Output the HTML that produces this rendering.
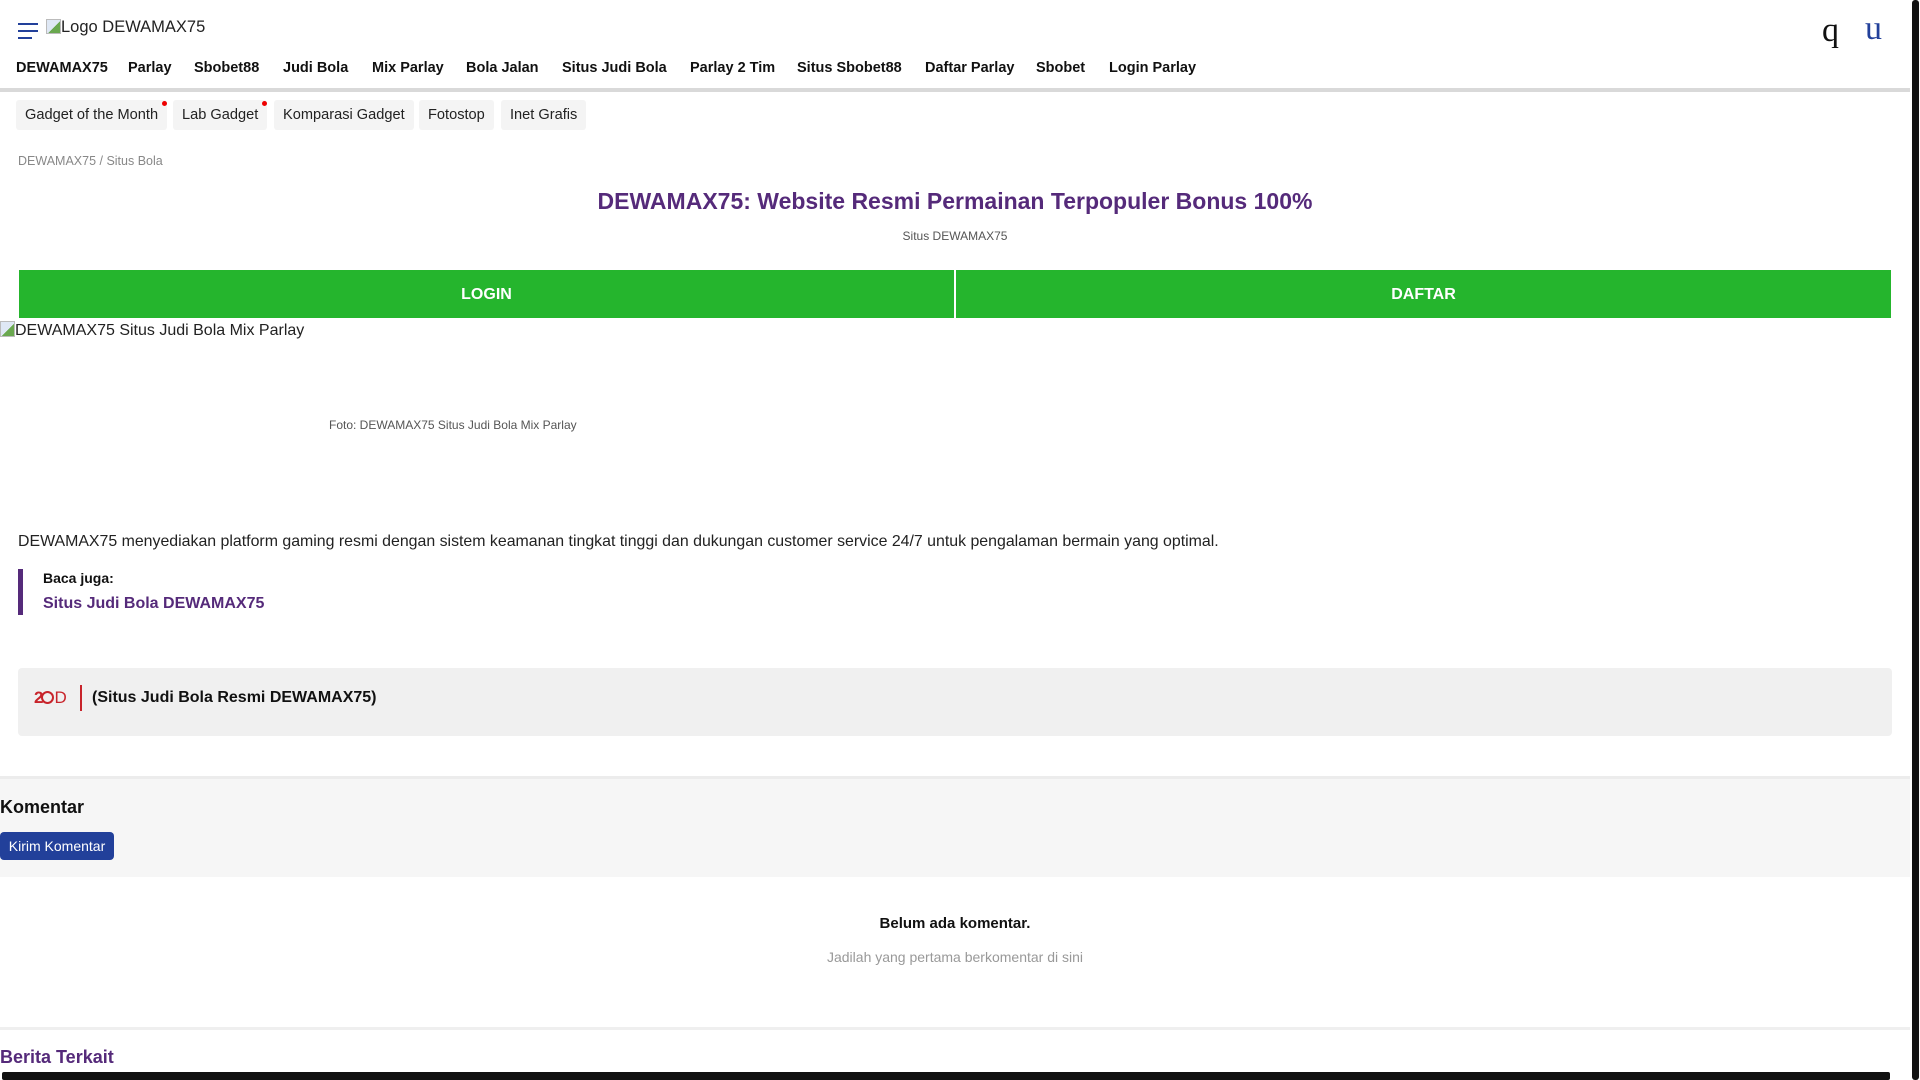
<!DOCTYPE html>
<html><head><meta charset="utf-8"><style>
*{margin:0;padding:0;box-sizing:border-box}
body{width:1920px;height:1080px;overflow:hidden;background:#fff;font-family:"Liberation Sans",sans-serif;color:#111;position:relative}
.a{position:absolute;white-space:nowrap}
.nav span{position:absolute;top:60px;font-weight:bold;font-size:14.5px;color:#111}
.tag{position:absolute;top:100px;height:30px;background:#f4f4f4;border-radius:3px;font-size:14.6px;line-height:30px;padding:0 9px;color:#222}
.dot{position:absolute;top:1px;right:0px;width:5px;height:5px;border-radius:50%;background:#e00}
</style></head><body>
<div class="a" style="left:18px;top:23px;width:20px;height:2px;background:#22409a"></div>
<div class="a" style="left:18px;top:30px;width:20px;height:2px;background:#22409a"></div>
<div class="a" style="left:18px;top:37px;width:14px;height:2px;background:#22409a"></div>
<div class="a" style="left:46px;top:18px;font-size:16.5px;color:#222"><span style="display:inline-block;width:15px;height:15px;border:1px solid #bbb;background:linear-gradient(135deg,#dfe8f5 55%,#6aa84f 55%);vertical-align:-2px"></span>Logo DEWAMAX75</div>
<div class="a" style="left:1822px;top:12px;font-family:'Liberation Serif',serif;font-size:34px;color:#111">q</div>
<div class="a" style="left:1865px;top:10px;font-family:'Liberation Serif',serif;font-size:34px;color:#22409a">u</div>
<div class="a" style="left:1912px;top:0;width:7px;height:1080px;background:#111;border-radius:3px"></div>
<div class="nav">
<span style="left:16px">DEWAMAX75</span><span style="left:128px">Parlay</span><span style="left:194px">Sbobet88</span><span style="left:283px">Judi Bola</span><span style="left:372px">Mix Parlay</span><span style="left:466px">Bola Jalan</span><span style="left:562px">Situs Judi Bola</span><span style="left:690px">Parlay 2 Tim</span><span style="left:797px">Situs Sbobet88</span><span style="left:925px">Daftar Parlay</span><span style="left:1036px">Sbobet</span><span style="left:1109px">Login Parlay</span>
</div>
<div class="a" style="left:0;top:88px;width:1910px;height:4px;background:#d9d9d9"></div>
<div class="tag" style="left:16px">Gadget of the Month<i class="dot"></i></div>
<div class="tag" style="left:173px">Lab Gadget<i class="dot"></i></div>
<div class="tag" style="left:274px">Komparasi Gadget</div>
<div class="tag" style="left:419px">Fotostop</div>
<div class="tag" style="left:501px">Inet Grafis</div>
<div class="a" style="left:18px;top:154px;font-size:12.5px;color:#888">DEWAMAX75 / Situs Bola</div>
<div class="a" style="left:0;width:1910px;text-align:center;top:188px;font-size:23px;font-weight:bold;color:#552a7a">DEWAMAX75: Website Resmi Permainan Terpopuler Bonus 100%</div>
<div class="a" style="left:0;width:1910px;text-align:center;top:229px;font-size:12px;color:#555">Situs DEWAMAX75</div>
<div class="a" style="left:19px;top:270px;width:935px;height:48px;background:#25b52d;color:#fff;font-weight:bold;font-size:16px;text-align:center;line-height:49px">LOGIN</div>
<div class="a" style="left:956px;top:270px;width:935px;height:48px;background:#25b52d;color:#fff;font-weight:bold;font-size:16px;text-align:center;line-height:49px">DAFTAR</div>
<div class="a" style="left:0;top:321px;font-size:16px;color:#222"><span style="display:inline-block;width:15px;height:16px;border:1px solid #bbb;background:linear-gradient(135deg,#dfe8f5 55%,#6aa84f 55%);vertical-align:-2px"></span>DEWAMAX75 Situs Judi Bola Mix Parlay</div>
<div class="a" style="left:329px;top:418px;font-size:12px;color:#555">Foto: DEWAMAX75 Situs Judi Bola Mix Parlay</div>
<div class="a" style="left:18px;top:533px;font-size:15.9px;color:#222">DEWAMAX75 menyediakan platform gaming resmi dengan sistem keamanan tingkat tinggi dan dukungan customer service 24/7 untuk pengalaman bermain yang optimal.</div>
<div class="a" style="left:18px;top:569px;width:5px;height:46px;background:#552a7a"></div>
<div class="a" style="left:43px;top:570px;font-size:14px;font-weight:bold;color:#111">Baca juga:</div>
<div class="a" style="left:43px;top:595px;font-size:16px;font-weight:bold;color:#552a7a">Situs Judi Bola DEWAMAX75</div>
<div class="a" style="left:18px;top:668px;width:1874px;height:68px;background:#f0f0f0;border-radius:4px"></div>
<div class="a" style="left:34px;top:688px;font-size:17px;font-weight:bold;color:#c8242b;letter-spacing:-2px">2<span style="border:2px solid #c8242b;border-radius:50%;display:inline-block;width:13px;height:13px;vertical-align:-1px"></span><span style="font-weight:normal">D</span></div>
<div class="a" style="left:80px;top:685px;width:2px;height:26px;background:#c8242b"></div>
<div class="a" style="left:92px;top:689px;font-size:16px;font-weight:bold;color:#111">(Situs Judi Bola Resmi DEWAMAX75)</div>
<div class="a" style="left:0;top:776px;width:1910px;height:3px;background:#ececec"></div>
<div class="a" style="left:0;top:779px;width:1910px;height:98px;background:#f6f6f6"></div>
<div class="a" style="left:0;top:797px;font-size:18px;font-weight:bold;color:#111">Komentar</div>
<div class="a" style="left:0;top:832px;width:114px;height:28px;background:#22409a;border-radius:4px;color:#fff;font-size:14px;line-height:28px;text-align:center">Kirim Komentar</div>
<div class="a" style="left:0;width:1910px;text-align:center;top:915px;font-size:15px;font-weight:bold;color:#111">Belum ada komentar.</div>
<div class="a" style="left:0;width:1910px;text-align:center;top:949px;font-size:14px;color:#999">Jadilah yang pertama berkomentar di sini</div>
<div class="a" style="left:0;top:1027px;width:1910px;height:3px;background:#efefef"></div>
<div class="a" style="left:0;top:1047px;font-size:18px;font-weight:bold;color:#552a7a">Berita Terkait</div>
<div class="a" style="left:2px;top:1072px;width:1888px;height:8px;background:#111;border-radius:2px"></div>
</body></html>
